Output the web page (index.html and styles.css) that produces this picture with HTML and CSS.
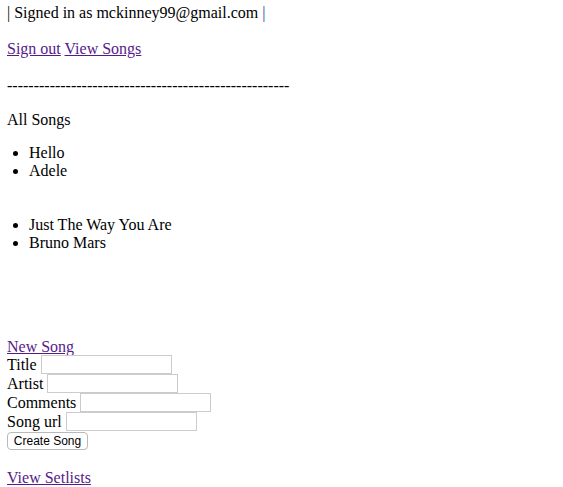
FILE: index.html
```html
<!DOCTYPE html>
<html>
<head>
<meta charset="utf-8">
<link rel="stylesheet" href="styles.css">
</head>
<body>
<div class="status">| Signed in as mckinney99@gmail.com <span class="bar">|</span></div>
<p class="nav"><a href="#">Sign out</a> <a href="#">View Songs</a></p>
<p class="rule">-----------------------------------------------------</p>
<p class="heading">All Songs</p>
<ul class="song">
  <li>Hello</li>
  <li>Adele</li>
</ul>
<ul class="song song-second">
  <li>Just The Way You Are</li>
  <li>Bruno Mars</li>
</ul>
<a class="new-song" href="#">New Song</a>
<form class="song-form">
  <div class="row"><label>Title</label> <input type="text" class="field"></div>
  <div class="row"><label>Artist</label> <input type="text" class="field"></div>
  <div class="row"><label>Comments</label> <input type="text" class="field"></div>
  <div class="row"><label>Song url</label> <input type="text" class="field"></div>
  <div class="row-btn"><button type="button" class="create">Create Song</button></div>
</form>
<p class="setlists"><a href="#">View Setlists</a></p>
</body>
</html>
```
FILE: styles.css
```css
html, body {
  background: #ffffff;
}
body {
  margin: 0;
  padding: 4px 7px 0 7px;
  font-family: "Liberation Serif", "Times New Roman", serif;
  font-size: 16px;
  line-height: 18px;
  color: #000;
}
a {
  color: #551a8b;
  text-decoration: underline;
}
.status {
  margin: 0;
}
.bar {
  color: #2a4a9a;
}
.nav {
  margin: 18px 0 0 0;
}
.rule {
  margin: 19px 0 0 0;
  letter-spacing: 0;
}
.heading {
  margin: 16px 0 0 0;
}
.song {
  margin: 15px 0 0 0;
  padding-left: 22px;
}
.song-second {
  margin-top: 36px;
}
.new-song {
  display: inline-block;
  margin-top: 86px;
}
.song-form {
  margin: -1px 0 0 0;
}
.row {
  display: flex;
  align-items: center;
  gap: 4px;
  height: 19px;
}
.row label {
  line-height: 19px;
}
.field {
  box-sizing: border-box;
  width: 131px;
  height: 19px;
  margin: 0;
  padding: 1px 2px;
  border: 1px solid #cccccc;
  border-radius: 0;
  background: #fff;
  font-size: 13px;
}
.row-btn {
  padding-top: 0;
}
.create {
  box-sizing: border-box;
  width: 81px;
  height: 18px;
  padding: 0;
  border: 1px solid #b9b9b9;
  border-radius: 4px;
  background: #ffffff;
  font-family: "Liberation Sans", Arial, sans-serif;
  font-size: 12px;
  color: #000;
  line-height: 16px;
}
.setlists {
  margin: 19px 0 0 0;
}
```
